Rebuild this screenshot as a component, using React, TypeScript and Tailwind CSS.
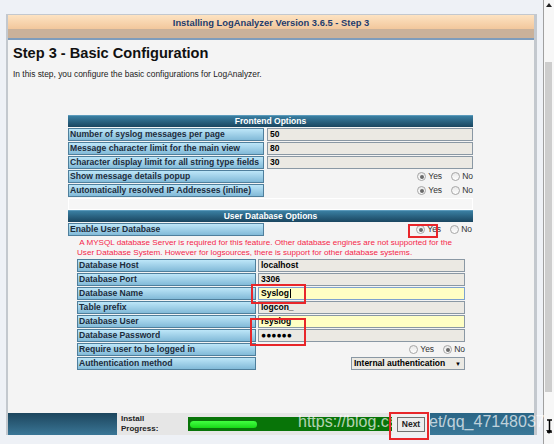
const font = "font-['Liberation_Sans',Arial,sans-serif]";

function Radio({ checked }: { checked: boolean }) {
  return (
    <span className="inline-flex h-[9px] w-[9px] items-center justify-center rounded-full border border-[#a6a6a6] bg-gradient-to-b from-[#e8e8e8] to-[#ffffff]">
      {checked && <span className="h-[4px] w-[4px] rounded-full bg-[#6a6a6a]" />}
    </span>
  );
}

function YesNo({ yes }: { yes: boolean }) {
  return (
    <div className="flex h-full items-center justify-end text-[8.5px] text-[#333]">
      <Radio checked={yes} />
      <span className="ml-[2px] mr-[9px]">Yes</span>
      <Radio checked={!yes} />
      <span className="ml-[2px]">No</span>
    </div>
  );
}

function Label({ text, w }: { text: string; w: string }) {
  return (
    <div
      className={`${w} flex h-[13px] shrink-0 items-center border border-[#4f7f9c] bg-gradient-to-b from-[#bde6f8] to-[#82bad8] pl-[1px] text-[8.6px] font-bold leading-none text-[#1c2c3c]`}
    >
      {text}
    </div>
  );
}

function Field({ value, yellow, focus }: { value: string; yellow?: boolean; focus?: boolean }) {
  return (
    <div
      className={`flex h-[13px] w-full items-center border pl-[2px] text-[8.5px] font-bold leading-none text-black ${
        yellow ? "bg-[#ffffc4]" : "bg-[#ebe9e3]"
      } ${focus ? "border-[#7da2ce]" : "border-[#8a98a4]"}`}
    >
      {value}
      {focus && <span className="ml-[1px] h-[9px] w-px bg-black" />}
    </div>
  );
}

function Header({ text }: { text: string }) {
  return (
    <div className="flex h-[12px] items-center justify-center border-t border-[#5b9abb] bg-gradient-to-b from-[#3a7fa2] to-[#1a4660] text-[8.5px] font-bold leading-none text-white">
      {text}
    </div>
  );
}

const frontRows: { label: string; value?: string; yes?: boolean }[] = [
  { label: "Number of syslog messages per page", value: "50" },
  { label: "Message character limit for the main view", value: "80" },
  { label: "Character display limit for all string type fields", value: "30" },
  { label: "Show message details popup", yes: true },
  { label: "Automatically resolved IP Addresses (inline)", yes: true },
];

const dbRows: { label: string; value?: string; yellow?: boolean; focus?: boolean; yes?: boolean; select?: boolean }[] = [
  { label: "Database Host", value: "localhost" },
  { label: "Database Port", value: "3306" },
  { label: "Database Name", value: "Syslog", yellow: true, focus: true },
  { label: "Table prefix", value: "logcon_" },
  { label: "Database User", value: "rsyslog", yellow: true },
  { label: "Database Password", value: "●●●●●●" },
  { label: "Require user to be logged in", yes: false },
  { label: "Authentication method", select: true },
];

export default function App() {
  return (
    <div className={`${font} relative flex h-[444px] w-[554px] overflow-hidden bg-white`}>
      <div className="flex w-[543px] flex-col bg-[#eef1f6]">
        <div className="h-[14px] shrink-0" />
        <div className="ml-[6px] flex h-[421px] w-[531px] shrink-0 flex-col border-l-2 border-r-[3px] border-t border-[#c3c8ce]">
          <div className="shrink-0 border-b-2 border-[#7d9cbc]">
            <div className="flex h-[14px] items-center justify-center bg-gradient-to-b from-[#fde3c2] to-[#f2c79c] pt-[2px] text-[9.4px] font-bold text-[#1f3c6c]">
              Installing LogAnalyzer Version 3.6.5 - Step 3
            </div>
            <div className="h-[9px] bg-[#c9b19a]" />
          </div>

          <div className="flex flex-1 flex-col bg-[#f4f4f4]">
            <h1 className="ml-[5px] mt-[4px] text-[14.6px] font-bold leading-[18px] text-[#111]">
              Step 3 - Basic Configuration
            </h1>
            <p className="ml-[5px] mt-[7px] text-[8.4px] leading-[10px] text-[#222]">
              In this step, you configure the basic configurations for LogAnalyzer.
            </p>

            <div className="ml-[60px] mt-[36px] flex w-[405px] flex-col">
              <Header text="Frontend Options" />
              <div className="mt-[1px] flex flex-col gap-[1px]">
                {frontRows.map((r) => (
                  <div key={r.label} className="flex h-[13px] gap-[3px]">
                    <Label text={r.label} w="w-[196px]" />
                    <div className="flex-1">
                      {r.value !== undefined ? <Field value={r.value} /> : <YesNo yes={!!r.yes} />}
                    </div>
                  </div>
                ))}
              </div>
              <div className="mt-[1px] h-[12px] border border-white bg-[#f6f6f6]" />
              <Header text="User Database Options" />
              <div className="mt-[1px] flex h-[13px] gap-[3px]">
                <Label text="Enable User Database" w="w-[196px]" />
                <div className="flex-1 pr-[1px]">
                  <YesNo yes />
                </div>
              </div>
              <div className="ml-[9px] mt-[2px] text-[8.1px] leading-[9.5px] text-[#f4264a]">
                &nbsp;A MYSQL database Server is required for this feature. Other database engines are not supported for the
                <br />
                User Database System. However for logsources, there is support for other database systems.
              </div>
              <div className="ml-[9px] mt-[2px] flex w-[388px] flex-col gap-[1px]">
                {dbRows.map((r) => (
                  <div key={r.label} className="flex h-[13px] gap-[2px]">
                    <Label text={r.label} w="w-[179px]" />
                    <div className="flex-1">
                      {r.select ? (
                        <div className="flex h-full justify-end">
                          <div className="flex h-[13px] w-[114px] items-center justify-between border border-[#8a98a4] bg-[#ebe9e3] pl-[2px] pr-[3px] text-[8.5px] font-bold leading-none text-black">
                            Internal authentication
                            <span className="text-[6px]">▼</span>
                          </div>
                        </div>
                      ) : r.value !== undefined ? (
                        <Field value={r.value} yellow={r.yellow} focus={r.focus} />
                      ) : (
                        <YesNo yes={!!r.yes} />
                      )}
                    </div>
                  </div>
                ))}
              </div>
            </div>
          </div>

          <div className="flex h-[22px] shrink-0">
            <div className="w-[109px] bg-gradient-to-b from-[#1d465e] to-[#3a7696]" />
            <div className="flex w-[71px] flex-col justify-center bg-[#e6e6e6] pl-[4px] text-[8px] font-bold leading-[10px] text-[#222]">
              <span>Install</span>
              <span>Progress:</span>
            </div>
            <div className="flex w-[204px] items-center bg-[#e6e6e6] py-[4px]">
              <div className="flex h-[14px] w-full items-center bg-[#087408] pl-[2px]">
                <div className="h-[7px] w-[67px] rounded-full bg-gradient-to-b from-[#40ff40] to-[#14d814]" />
              </div>
            </div>
            <div className="relative z-10 flex w-[38px] items-center justify-center bg-[#f0f0f0]">
              <div className="flex h-[15px] w-[28px] items-center justify-center border border-[#707070] bg-[#ececec] text-[8.5px] font-bold text-[#222]">
                Next
              </div>
            </div>
            <div className="flex-1 bg-gradient-to-b from-[#2a6585] to-[#3a7898]" />
          </div>
        </div>
      </div>

      <div className="relative w-[11px] border-l border-[#a0a0a0] bg-[#f7f7f7]">
        <svg className="absolute left-[2px] top-[3px]" width="6" height="4" viewBox="0 0 6 4">
          <path d="M0 4 L3 0 L6 4 Z" fill="#222" />
        </svg>
        <div className="absolute left-[1px] top-[62px] h-[330px] w-[7px] bg-[#cdcdcd]" />
        <svg className="absolute left-[2px] top-[430px]" width="6" height="4" viewBox="0 0 6 4">
          <path d="M0 0 L6 0 L3 4 Z" fill="#222" />
        </svg>
      </div>

      {/* watermark, partly hidden behind the Next button */}
      <div className="pointer-events-none absolute left-[298px] top-[413px] text-[16px] leading-[18px] text-white/70">
        https://blog.cs
      </div>
      <div className="pointer-events-none absolute left-[429px] top-[413px] text-[16px] leading-[18px] text-white/70">
        et/qq_47148037
      </div>
      {/* mouse text cursor */}
      <svg className="absolute left-[546px] top-[419px]" width="7" height="14" viewBox="0 0 7 14">
        <path d="M1 1 H6 M3.5 1 V13 M1 13 H6" stroke="#000" strokeWidth="1.5" fill="none" />
      </svg>

      {/* annotation boxes */}
      <div className="absolute left-[408px] top-[224px] h-[14px] w-[30px] border-2 border-[#e8262a]" />
      <div className="absolute left-[251px] top-[284px] h-[20px] w-[55px] border-2 border-[#e8262a]" />
      <div className="absolute left-[250px] top-[318px] h-[28px] w-[56px] border-2 border-[#e8262a]" />
      <div className="absolute z-20 left-[389px] top-[412px] h-[28px] w-[40px] border-2 border-[#e8262a]" />
    </div>
  );
}
